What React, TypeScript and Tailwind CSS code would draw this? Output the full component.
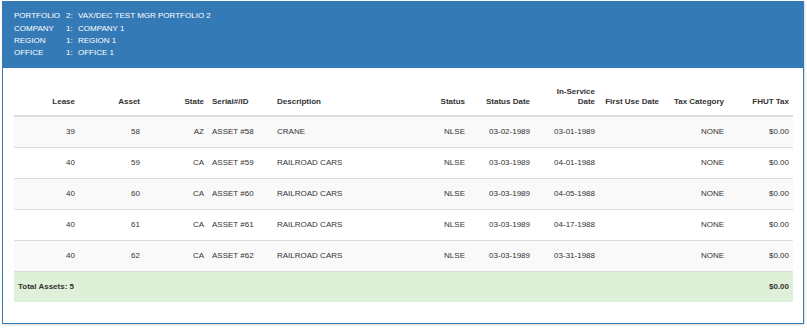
import React from "react";

type Row = {
  lease: string;
  asset: string;
  state: string;
  serial: string;
  description: string;
  status: string;
  statusDate: string;
  inService: string;
  firstUse: string;
  taxCategory: string;
  fhut: string;
};

const rows: Row[] = [
  { lease: "39", asset: "58", state: "AZ", serial: "ASSET #58", description: "CRANE", status: "NLSE", statusDate: "03-02-1989", inService: "03-01-1989", firstUse: "", taxCategory: "NONE", fhut: "$0.00" },
  { lease: "40", asset: "59", state: "CA", serial: "ASSET #59", description: "RAILROAD CARS", status: "NLSE", statusDate: "03-03-1989", inService: "04-01-1988", firstUse: "", taxCategory: "NONE", fhut: "$0.00" },
  { lease: "40", asset: "60", state: "CA", serial: "ASSET #60", description: "RAILROAD CARS", status: "NLSE", statusDate: "03-03-1989", inService: "04-05-1988", firstUse: "", taxCategory: "NONE", fhut: "$0.00" },
  { lease: "40", asset: "61", state: "CA", serial: "ASSET #61", description: "RAILROAD CARS", status: "NLSE", statusDate: "03-03-1989", inService: "04-17-1988", firstUse: "", taxCategory: "NONE", fhut: "$0.00" },
  { lease: "40", asset: "62", state: "CA", serial: "ASSET #62", description: "RAILROAD CARS", status: "NLSE", statusDate: "03-03-1989", inService: "03-31-1988", firstUse: "", taxCategory: "NONE", fhut: "$0.00" },
];

const context = [
  { label: "PORTFOLIO", num: "2:", value: "VAX/DEC TEST MGR PORTFOLIO 2" },
  { label: "COMPANY", num: "1:", value: "COMPANY 1" },
  { label: "REGION", num: "1:", value: "REGION 1" },
  { label: "OFFICE", num: "1:", value: "OFFICE 1" },
];

export default function App() {
  return (
    <div className="h-[328px] w-[807px] bg-white pl-[2px] pt-[1px] font-['Liberation_Sans',Arial,sans-serif] text-[8px] text-[#333]">
      <div className="h-[323px] w-[802px] border border-[#337ab7] shadow-[1px_1px_2px_rgba(0,0,0,0.15)]">
        <div className="h-[66px] bg-[#337ab7] pl-[11px] pt-[8px] text-white">
          {context.map((c) => (
            <div key={c.label} className="flex h-[12.4px] items-center leading-[12px]">
              <span className="w-[52px]">{c.label}</span>
              <span className="w-[12px]">{c.num}</span>
              <span>{c.value}</span>
            </div>
          ))}
        </div>

        <div className="px-[11px] pt-[11px]">
          <table className="w-[779px] table-fixed border-collapse">
            <colgroup>
              <col className="w-[65px]" />
              <col className="w-[65px]" />
              <col className="w-[64px]" />
              <col className="w-[65px]" />
              <col className="w-[147px]" />
              <col className="w-[49px]" />
              <col className="w-[65px]" />
              <col className="w-[65px]" />
              <col className="w-[64px]" />
              <col className="w-[65px]" />
              <col className="w-[65px]" />
            </colgroup>
            <thead>
              <tr className="border-b-2 border-[#ddd] align-bottom font-bold leading-[10px]">
                <th className="px-1 py-2 text-right">Lease</th>
                <th className="px-1 py-2 text-right">Asset</th>
                <th className="px-1 py-2 text-right">State</th>
                <th className="px-1 py-2 text-left">Serial#/ID</th>
                <th className="px-1 py-2 text-left">Description</th>
                <th className="px-1 py-2 text-right">Status</th>
                <th className="px-1 py-2 text-right">Status Date</th>
                <th className="px-1 py-2 text-right">
                  In-Service
                  <br />
                  Date
                </th>
                <th className="whitespace-nowrap px-1 py-2 text-right">First Use Date</th>
                <th className="px-1 py-2 text-right">Tax Category</th>
                <th className="px-1 py-2 text-right">FHUT Tax</th>
              </tr>
            </thead>
            <tbody className="leading-[14px]">
              {rows.map((r, i) => (
                <tr
                  key={r.asset}
                  className={`border-t border-[#ddd] ${i % 2 === 0 ? "bg-[#f9f9f9]" : "bg-white"}`}
                >
                  <td className="px-1 py-2 text-right">{r.lease}</td>
                  <td className="px-1 py-2 text-right">{r.asset}</td>
                  <td className="px-1 py-2 text-right">{r.state}</td>
                  <td className="px-1 py-2 text-left">{r.serial}</td>
                  <td className="px-1 py-2 text-left">{r.description}</td>
                  <td className="px-1 py-2 text-right">{r.status}</td>
                  <td className="px-1 py-2 text-right">{r.statusDate}</td>
                  <td className="px-1 py-2 text-right">{r.inService}</td>
                  <td className="px-1 py-2 text-right">{r.firstUse}</td>
                  <td className="px-1 py-2 text-right">{r.taxCategory}</td>
                  <td className="px-1 py-2 text-right">{r.fhut}</td>
                </tr>
              ))}
              <tr className="border-t border-[#ddd] bg-[#dff0d8] font-bold">
                <td colSpan={10} className="px-1 py-2 text-left">
                  Total Assets: 5
                </td>
                <td className="px-1 py-2 text-right">$0.00</td>
              </tr>
            </tbody>
          </table>
        </div>
      </div>
    </div>
  );
}
